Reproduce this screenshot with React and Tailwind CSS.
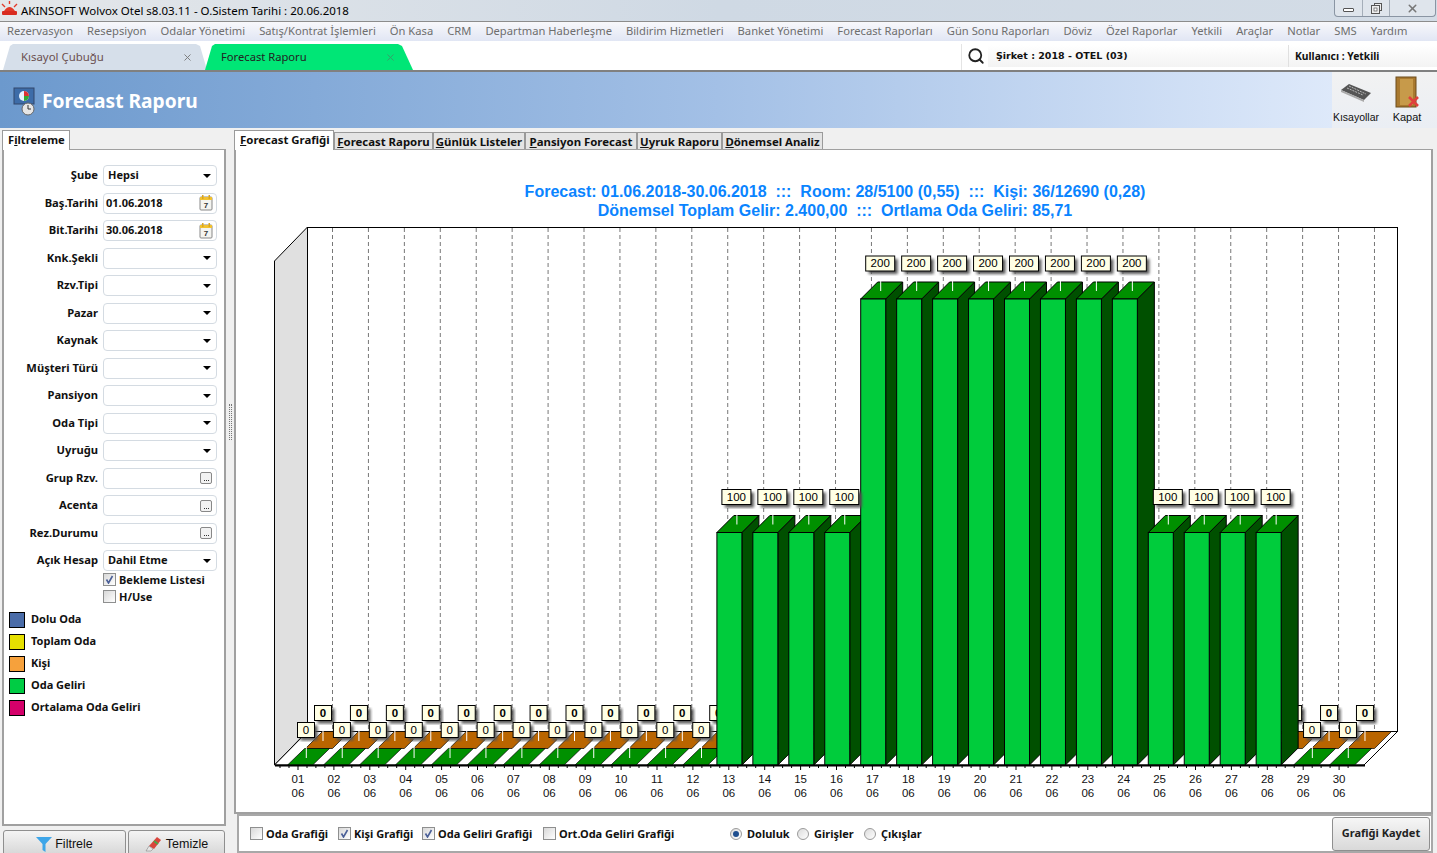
import React from "react";
import { Search, X } from "lucide-react";

const menus = ["Rezervasyon","Resepsiyon","Odalar Yönetimi","Satış/Kontrat İşlemleri","Ön Kasa","CRM","Departman Haberleşme","Bildirim Hizmetleri","Banket Yönetimi","Forecast Raporları","Gün Sonu Raporları","Döviz","Özel Raporlar","Yetkili","Araçlar","Notlar","SMS","Yardım"];

const filterRows = [
  { label: "Şube", type: "select", value: "Hepsi" },
  { label: "Baş.Tarihi", type: "date", value: "01.06.2018" },
  { label: "Bit.Tarihi", type: "date", value: "30.06.2018" },
  { label: "Knk.Şekli", type: "select" },
  { label: "Rzv.Tipi", type: "select" },
  { label: "Pazar", type: "select" },
  { label: "Kaynak", type: "select" },
  { label: "Müşteri Türü", type: "select" },
  { label: "Pansiyon", type: "select" },
  { label: "Oda Tipi", type: "select" },
  { label: "Uyruğu", type: "select" },
  { label: "Grup Rzv.", type: "dots" },
  { label: "Acenta", type: "dots" },
  { label: "Rez.Durumu", type: "dots" },
  { label: "Açık Hesap", type: "select", value: "Dahil Etme" },
];

const legend = [
  ["Dolu Oda", "bg-[#4a6ca8]"],
  ["Toplam Oda", "bg-[#e6e000]"],
  ["Kişi", "bg-[#f6a13c]"],
  ["Oda Geliri", "bg-[#00cc44]"],
  ["Ortalama Oda Geliri", "bg-[#d4006a]"],
];

const tabs = [
  ["F", "orecast Raporu", "w-[99px]"],
  ["G", "ünlük Listeler", "w-[92px]"],
  ["P", "ansiyon Forecast", "w-[112px]"],
  ["U", "yruk Raporu", "w-[85px]"],
  ["D", "önemsel Analiz", "w-[101px]"],
];

// revenue per day, 30 days of june
const days = Array.from({ length: 30 }, (_, i) => {
  if (i >= 12 && i <= 15) return 100;
  if (i >= 16 && i <= 23) return 200;
  if (i >= 24 && i <= 27) return 100;
  return 0;
});

function Mark({ x, y, w, h, text, bold }) {
  return (
    <g>
      <rect x={x + 3} y={y + 3} width={w} height={h} fill="#555" filter="url(#blur)" />
      <rect x={x} y={y} width={w} height={h} fill="#ffffe6" stroke="#000" />
      <text x={x + w / 2} y={y + h - 4} textAnchor="middle" fontSize="11.5" fontWeight={bold ? 700 : 400} fontFamily="Liberation Sans, sans-serif">{text}</text>
    </g>
  );
}

function Chart() {
  const backX = (i) => 305.5 + 35.93 * i;
  const frontX = (i) => 287.6 + 35.93 * i;
  const barX = (i) => 285.5 + 35.95 * i;
  const barTop = (v) => 766 - v * 2.335;
  return (
    <svg width="1195" height="590" viewBox="236 222 1195 590" className="block">
      <defs>
        <filter id="blur"><feGaussianBlur stdDeviation="1.5" /></filter>
      </defs>
      {/* walls and floor */}
      <polygon points="274.5,261 307.5,227 307.5,731 274.5,765" fill="#e0e0e0" stroke="#000" />
      <rect x="307.5" y="227.5" width="1090" height="504" fill="#fff" stroke="#000" />
      <polygon points="307.5,731.5 1397.5,731.5 1364,765 274.5,765" fill="#fff" stroke="#000" />
      {days.map((_, i) => (
        <line key={i} x1={332.5 + 35.93 * i} y1="228" x2={332.5 + 35.93 * i} y2="731" stroke="#777" strokeDasharray="4 3" />
      ))}
      {/* back row, flat */}
      {days.map((_, i) => (
        <polygon key={i} points={`${backX(i)},748.5 ${backX(i) + 27},748.5 ${backX(i) + 44},731.5 ${backX(i) + 17},731.5`} fill="#b96500" stroke="#000" strokeWidth="0.7" />
      ))}
      {days.map((_, i) => (
        <g key={i}>
          <line x1={323 + 35.93 * i} y1="720" x2={323 + 35.93 * i} y2="741" stroke="#fff" />
          <Mark x={314.5 + 35.93 * i} y={705.5} w={17} h={15} text="0" bold />
        </g>
      ))}
      {/* front row, flat */}
      {days.map((v, i) => v === 0 && (
        <polygon key={i} points={`${frontX(i)},765 ${frontX(i) + 25},765 ${frontX(i) + 42},748.5 ${frontX(i) + 17},748.5`} fill="#009000" stroke="#000" strokeWidth="0.7" />
      ))}
      {days.map((v, i) => v === 0 && (
        <g key={i}>
          <line x1={306.3 + 35.93 * i} y1="737" x2={306.3 + 35.93 * i} y2="758" stroke="#fff" />
          <Mark x={297.5 + 35.93 * i} y={722.5} w={17} h={15} text="0" />
        </g>
      ))}
      {/* tall bars */}
      {days.map((v, i) => {
        if (v === 0) return null;
        const x = barX(i);
        const top = barTop(v);
        return (
          <g key={i} stroke="#000">
            <polygon points={`${x + 25},${top} ${x + 42},${top - 17} ${x + 42},748 ${x + 25},765`} fill="#005000" />
            <polygon points={`${x},${top} ${x + 17},${top - 17} ${x + 42},${top - 17} ${x + 25},${top}`} fill="#009000" />
            <rect x={x} y={top} width="25" height={765 - top} fill="#00cc3c" />
          </g>
        );
      })}
      {days.map((v, i) => v > 0 && (
        <g key={i}>
          <line x1={barX(i) + 20} y1={barTop(v) - 27} x2={barX(i) + 20} y2={barTop(v) - 8} stroke="#fff" />
          <Mark x={barX(i) + 5} y={barTop(v) - 43} w={29} h={15} text={String(v)} />
        </g>
      ))}
      {/* axis */}
      <line x1="275" y1="765.5" x2="1365" y2="765.5" stroke="#000" strokeWidth="2" />
      {days.map((_, i) => (
        <g key={i} stroke="#000">
          <line x1={298 + 35.9 * i} y1="766" x2={298 + 35.9 * i} y2="770" />
          <line x1={280 + 35.9 * i} y1="766" x2={280 + 35.9 * i} y2="768" />
          <line x1={289 + 35.9 * i} y1="766" x2={289 + 35.9 * i} y2="768" />
          <line x1={307 + 35.9 * i} y1="766" x2={307 + 35.9 * i} y2="768" />
        </g>
      ))}
      {days.map((_, i) => (
        <text key={i} textAnchor="middle" fontSize="11.5" fontFamily="Liberation Sans, sans-serif" fill="#111">
          <tspan x={298 + 35.9 * i} y="783">{String(i + 1).padStart(2, "0")}</tspan>
          <tspan x={298 + 35.9 * i} y="797">06</tspan>
        </text>
      ))}
    </svg>
  );
}

function CalendarIcon() {
  return (
    <svg width="14" height="16" viewBox="0 0 14 16" className="shrink-0">
      <rect x="1" y="2" width="12" height="13" rx="1" fill="#f4f4f0" stroke="#888" />
      <rect x="1" y="2" width="12" height="3" fill="#f2c230" />
      <rect x="3" y="0" width="1.5" height="4" fill="#d9a520" />
      <rect x="9.5" y="0" width="1.5" height="4" fill="#d9a520" />
      <text x="7" y="13" textAnchor="middle" fontSize="8" fontWeight="700" fill="#333" fontFamily="Liberation Sans, sans-serif">7</text>
    </svg>
  );
}

function Field({ type, value }) {
  return (
    <div className={`w-[114px] h-[21px] border border-[#d4dbe2] rounded-sm bg-white flex items-center justify-between pr-[3px] ${type === "select" ? "pl-[4px]" : "pl-[2px]"}`}>
      <span className="text-[11px] font-bold text-[#111] leading-none -mt-[2px]">{value}</span>
      {type === "select" && <span className="w-0 h-0 border-x-[4px] border-x-transparent border-t-[4px] border-t-black mr-[2px]"></span>}
      {type === "date" && <CalendarIcon />}
      {type === "dots" && (
        <span className="w-[12px] h-[12px] mr-[1px] border border-[#888] rounded-[2px] bg-[#f2f2f2] flex items-end justify-center gap-px pb-[2px]">
          <i className="w-px h-px bg-[#333]"></i><i className="w-px h-px bg-[#333]"></i><i className="w-px h-px bg-[#333]"></i>
        </span>
      )}
    </div>
  );
}

function Check({ checked }) {
  return (
    <span className="w-[13px] h-[13px] border border-[#8e8f8f] bg-gradient-to-br from-[#d8d8d8] to-white flex items-center justify-center shrink-0">
      {checked && (
        <svg width="9" height="9" viewBox="0 0 9 9"><path d="M1.5 4.5 L3.5 8 L7.5 1" fill="none" stroke="#4a5f97" strokeWidth="1.6" /></svg>
      )}
    </span>
  );
}

function Radio({ checked }) {
  return (
    <span className="w-[12px] h-[12px] rounded-full border border-[#9a9a9a] bg-gradient-to-br from-[#dcdcdc] to-white flex items-center justify-center shrink-0">
      {checked && <span className="w-[6px] h-[6px] rounded-full bg-[#1f4f8f]"></span>}
    </span>
  );
}

function Option({ check, radio, checked, text, cls }) {
  return (
    <div className={`flex items-center ${radio ? "gap-[5px]" : "gap-[3px]"} ${cls || ""}`}>
      {check && <Check checked={checked} />}
      {radio && <Radio checked={checked} />}
      <span className="text-[11px] font-bold text-[#111] leading-none">{text}</span>
    </div>
  );
}

export default function App() {
  return (
    <div className="w-full h-screen overflow-hidden flex flex-col bg-[#f0f0f0] font-['Noto_Sans','DejaVu_Sans',sans-serif]">
      {/* Title bar */}
      <div className="h-[21px] flex items-start bg-gradient-to-r from-[#e4e7ea] via-[#cfd9e4] to-[#d3dce6] shrink-0">
        <svg width="17" height="17" viewBox="0 0 17 17" className="mt-[1px] ml-[1px]">
          <path d="M3 10 Q8.5 2 14 10 Z" fill="#e23a2a" />
          <rect x="1" y="10" width="15" height="4" rx="1" fill="#d92c20" />
          <path d="M1 3 L4 6 M16 3 L13 6 M8.5 0 V3" stroke="#e23a2a" strokeWidth="1.4" />
        </svg>
        <span className="ml-[3px] text-[11.5px] leading-[21px] text-black">AKINSOFT Wolvox Otel s8.03.11 - O.Sistem Tarihi : 20.06.2018</span>
        <div className="ml-auto mr-[1px] w-[102px] h-[17px] flex border border-t-0 border-[#8a95a3] rounded-b-[4px] bg-[#dfe5ec]">
          <div className="w-[28px] flex items-center justify-center border-r border-[#a5aeb9]">
            <span className="w-[11px] h-[4px] border border-[#555] bg-white mt-[4px] rounded-[1px]"></span>
          </div>
          <div className="w-[27px] flex items-center justify-center border-r border-[#a5aeb9]">
            <svg width="11" height="11" viewBox="0 0 11 11">
              <rect x="3.5" y="0.5" width="7" height="7" fill="#eee" stroke="#555" />
              <rect x="0.5" y="2.5" width="8" height="8" fill="#eee" stroke="#555" />
              <rect x="3" y="5" width="3" height="3" fill="#fff" stroke="#555" strokeWidth="0.7" />
            </svg>
          </div>
          <div className="flex-1 flex items-center justify-center"><X size={13} strokeWidth={2.8} color="#777" /></div>
        </div>
      </div>

      {/* Menu */}
      <div className="h-[20px] border-t border-[#8c8c8c] bg-gradient-to-b from-[#f8f8fb] to-[#e1e6f4] flex items-center gap-[14px] pl-[7px] shrink-0">
        {menus.map((m) => (
          <span key={m} className="text-[11.2px] text-[#6e6e6e] whitespace-nowrap">{m}</span>
        ))}
      </div>

      {/* Open tabs */}
      <div className="h-[31px] bg-white border-b-2 border-[#808080] flex items-end shrink-0">
        <div className="w-[204px] h-[26px] ml-[3px] bg-[#d6dfea] [clip-path:polygon(0_100%,7px_8%,10px_0,193px_0,197px_8%,204px_100%)] flex items-center justify-between pl-[18px] pr-[14px]">
          <span className="text-[11.4px] text-[#6b4f4f]">Kısayol Çubuğu</span>
          <X size={11} color="#777" />
        </div>
        <div className="w-[208px] h-[26px] -ml-[2px] bg-[#00e676] [clip-path:polygon(0_100%,7px_8%,10px_0,193px_0,197px_8%,208px_100%)] flex items-center justify-between pl-[16px] pr-[17px]">
          <span className="text-[11.2px] text-[#222]">Forecast Raporu</span>
          <X size={11} color="#3a9a6a" />
        </div>
        <div className="h-[26px] flex-1 ml-[548px] flex items-center border-l border-[#e4e4e4] pb-[2px]">
          <Search size={18} strokeWidth={2.4} color="#222" className="ml-[5px] shrink-0" />
          <div className="ml-[3px] h-[22px] flex-1 bg-gradient-to-b from-white to-[#f3f3f3] flex items-center text-[10.3px] font-bold text-[#111]">
            <span className="w-[300px] pl-[8px] font-['DejaVu_Sans',sans-serif] text-[9.5px]">Şirket : 2018 - OTEL (03)</span>
            <span className="h-full border-l border-[#e0e0e0] pl-[6px] leading-[22px]">Kullanıcı : Yetkili</span>
          </div>
        </div>
      </div>

      {/* Banner */}
      <div className="h-[56px] flex bg-gradient-to-r from-[#6c99cd] via-[#a3c0e6] to-[#e8f0fd] shrink-0">
        <svg width="24" height="32" viewBox="0 0 24 32" className="ml-[13px] mt-[14px]">
          <rect x="1" y="2" width="20" height="16" fill="#3d6ca8" stroke="#33466b" />
          <circle cx="11" cy="10" r="5" fill="#e8f4ff" />
          <path d="M11 10 V5 A5 5 0 0 1 16 10 Z" fill="#d33" />
          <path d="M11 10 H16 A5 5 0 0 1 11 15 Z" fill="#3a3" />
          <circle cx="15" cy="23" r="6" fill="#e6e6e6" stroke="#666" />
          <path d="M15 19 V23 H18" fill="none" stroke="#333" />
        </svg>
        <span className="ml-[5px] mt-[14px] text-[19.2px] font-bold text-white leading-[30px]">Forecast Raporu</span>
        <div className="ml-auto w-[105px] bg-gradient-to-b from-[#f2f2f2] to-[#eaeef4] flex text-[#111] font-['Liberation_Sans',sans-serif]">
          <div className="w-[48px] flex flex-col items-center">
            <svg width="34" height="24" viewBox="0 0 34 24" className="mt-[8px]">
              <path d="M2 10 L10 4 L32 13 L25 20 Z" fill="#555" />
              <path d="M8 8 L24 15 M10 6 L27 14" stroke="#b9b9b9" strokeDasharray="2 1" />
              <path d="M2 10 L25 20 L25 22 L2 12 Z" fill="#aaa" />
            </svg>
            <span className="mt-[6px] text-[10.5px] leading-[14px] whitespace-nowrap">Kısayollar</span>
          </div>
          <div className="flex-1 flex flex-col items-center pr-[3px]">
            <svg width="26" height="32" viewBox="0 0 26 32" className="mt-[4px]">
              <rect x="2" y="1" width="20" height="30" fill="#a9792f" stroke="#6d4c1d" />
              <rect x="6" y="3" width="13" height="26" fill="#c79a4a" />
              <path d="M15 21 L24 30 M24 21 L15 30" stroke="#e0403c" strokeWidth="2.6" />
            </svg>
            <span className="mt-[2px] text-[11px] leading-[14px]">Kapat</span>
          </div>
        </div>
      </div>

      <div className="flex-1 min-h-0 flex pt-[2px]">
        {/* Filter panel */}
        <div className="w-[227px] shrink-0 flex flex-col pl-[2px]">
          <div className="h-[20px] flex items-end">
            <div className="w-[68px] h-[20px] bg-white border border-b-0 border-[#9a9a9a] text-[11.2px] font-bold text-[#111] pl-[5px] leading-[18px] z-10">
              F<span className="underline">i</span>ltreleme
            </div>
          </div>
          <div className="-mt-px flex-1 min-h-0 mr-[1px] bg-white border-2 border-t border-[#a0a0a0] pt-[12px] flex flex-col">
            {filterRows.map((r) => (
              <div key={r.label} className="h-[27.5px] shrink-0 flex items-center justify-end pr-[7px] gap-[5px]">
                <span className="text-[11.2px] font-bold text-[#111] whitespace-nowrap">{r.label}</span>
                <Field type={r.type} value={r.value} />
              </div>
            ))}
            <div className="-mt-[2px] pl-[99px] flex flex-col gap-[4px]">
              <Option check checked text="Bekleme Listesi" />
              <Option check text="H/Use" />
            </div>
            <div className="mt-[9px] pl-[5px] flex flex-col gap-[6px]">
              {legend.map(([name, color]) => (
                <div key={name} className="flex items-center gap-[6px] h-[16px]">
                  <span className={`w-[16px] h-[16px] border border-black ${color}`}></span>
                  <span className="text-[11px] font-bold text-[#111]">{name}</span>
                </div>
              ))}
            </div>
          </div>
          <div className="h-[27px] pt-[4px] flex gap-[2px] shrink-0">
            <button className="w-[123px] h-[28px] ml-px border border-[#8f8f8f] rounded-t-[3px] bg-gradient-to-b from-[#f4f4f4] to-[#d4d4d4] flex items-center justify-center gap-[3px] text-[12.5px] text-[#111] font-['Liberation_Sans',sans-serif] font-medium">
              <svg width="16" height="16" viewBox="0 0 16 16"><path d="M0 1 H16 L9.5 8 V16 L6.5 14 V8 Z" fill="#3da5e8" /></svg>
              <span>Filtrele</span>
            </button>
            <button className="w-[97px] h-[28px] border border-[#8f8f8f] rounded-t-[3px] bg-gradient-to-b from-[#f4f4f4] to-[#d4d4d4] flex items-center justify-center gap-[3px] text-[12.5px] text-[#111] font-['Liberation_Sans',sans-serif] font-medium">
              <svg width="18" height="16" viewBox="0 0 18 16">
                <path d="M4 10 L12 1 L16 4 L9 13 Z" fill="#d9453d" />
                <path d="M4 10 L8 13 L6 15 L1 15 Z" fill="#e6e6e6" stroke="#777" strokeWidth="0.5" />
                <path d="M9 5 L13 8" stroke="#4aa84a" strokeWidth="2" />
              </svg>
              <span>Temizle</span>
            </button>
          </div>
        </div>

        {/* Splitter */}
        <div className="w-[7px] shrink-0 flex items-center justify-center">
          <span className="w-[3px] h-[36px] border-x border-dotted border-[#777] mb-[140px]"></span>
        </div>

        {/* Report area */}
        <div className="flex-1 min-w-0 flex flex-col pr-[4px]">
          <div className="h-[20px] flex items-end text-[11.4px] font-bold text-[#111] shrink-0">
            <div className="w-[100px] h-[20px] bg-white border border-b-0 border-[#9a9a9a] pl-[5px] leading-[18px] z-10 whitespace-nowrap">
              <span className="underline">F</span>orecast Grafiği
            </div>
            {tabs.map(([first, rest, w]) => (
              <div key={rest} className={`h-[18px] ${w} bg-[#e4e4e4] border border-b-0 border-[#9a9a9a] text-center leading-[17px] whitespace-nowrap`}>
                <span className="underline">{first}</span>{rest}
              </div>
            ))}
          </div>
          <div className="-mt-px h-[665px] shrink-0 bg-white border-2 border-t border-[#a0a0a0] flex flex-col">
            <div className="h-[72px] shrink-0 pt-[32px] pl-[3px] flex flex-col items-center text-[16px] font-semibold leading-[19px] text-[#0a84ff] font-['Liberation_Sans',sans-serif] whitespace-pre">
              <span>Forecast: 01.06.2018-30.06.2018  :::  Room: 28/5100 (0,55)  :::  Kişi: 36/12690 (0,28)</span>
              <span>Dönemsel Toplam Gelir: 2.400,00  :::  Ortlama Oda Geliri: 85,71</span>
            </div>
            <Chart />
          </div>
          <div className="flex-1 min-h-0 ml-[3px] bg-white border-2 border-[#a8a8a8] flex items-center pl-[11px]">
            <Option check text="Oda Grafiği" cls="w-[88px]" />
            <Option check checked text="Kişi Grafiği" cls="w-[84px]" />
            <Option check checked text="Oda Geliri Grafiği" cls="w-[121px]" />
            <Option check text="Ort.Oda Geliri Grafiği" cls="w-[187px]" />
            <Option radio checked text="Doluluk" cls="w-[67px]" />
            <Option radio text="Girişler" cls="w-[67px]" />
            <Option radio text="Çıkışlar" cls="w-[100px]" />
            <button className="ml-auto mr-[1px] w-[98px] h-[34px] border border-[#8f8f8f] rounded-[3px] bg-gradient-to-b from-[#f6f6f6] to-[#d9d9d9] text-[11px] font-bold text-[#222] whitespace-nowrap">Grafiği Kaydet</button>
          </div>
        </div>
      </div>
    </div>
  );
}
